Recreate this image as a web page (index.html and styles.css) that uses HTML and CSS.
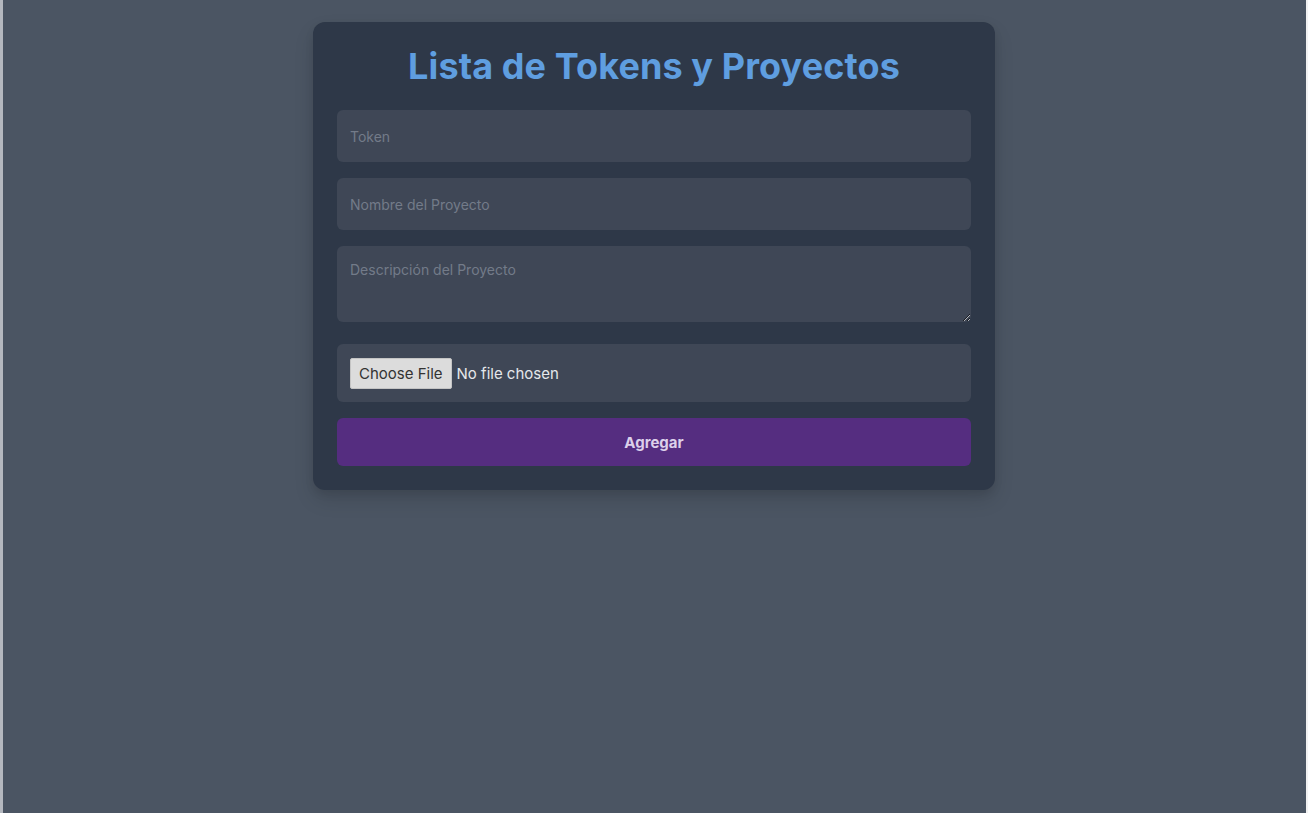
FILE: index.html
```html
<!DOCTYPE html>
<html lang="es">
<head>
<meta charset="utf-8">
<title>Lista de Tokens y Proyectos</title>
<link rel="stylesheet" href="styles.css">
</head>
<body>
<main class="page">
  <form class="card">
    <h1 class="title">Lista de Tokens y Proyectos</h1>
    <input class="field field-input" type="text" placeholder="Token">
    <input class="field field-input" type="text" placeholder="Nombre del Proyecto">
    <textarea class="field field-textarea" placeholder="Descripción del Proyecto"></textarea>
    <div class="field file-wrap"><input class="file-input" type="file"></div>
    <button class="submit" type="button">Agregar</button>
  </form>
</main>
</body>
</html>
```
FILE: styles.css
```css
html, body {
  margin: 0;
  height: 100%;
}
body {
  background: #4b5563;
  border-left: 3px solid #b4b8bf;
  border-right: 2px solid #f2f2f2;
  box-sizing: border-box;
  font-family: Inter, "Liberation Sans", Arial, sans-serif;
}
.page {
  display: flex;
  justify-content: center;
  padding-top: 22px;
  padding-right: 1px;
}
.card {
  width: 682px;
  box-sizing: border-box;
  background: #2e3848;
  border-radius: 12px;
  padding: 24px;
  display: flex;
  flex-direction: column;
  gap: 16px;
  box-shadow: 0 10px 20px rgba(0,0,0,0.12), 0 4px 8px rgba(0,0,0,0.08);
}
.title {
  margin: 0 0 8px;
  text-align: center;
  color: #5f9ee0;
  font-size: 36px;
  line-height: 40px;
  font-weight: 700;
  letter-spacing: 0.1px;
}
.field {
  display: block;
  box-sizing: border-box;
  width: 100%;
  background: #3f4756;
  border: none;
  border-radius: 6px;
  color: #d1d5db;
  font-family: inherit;
  font-size: 14px;
  outline: none;
  margin: 0;
}
.field::placeholder {
  color: #737b89;
}
.field-input {
  height: 52px;
  padding: 0 13px;
}
.field-textarea {
  height: 76px;
  padding: 15px 13px;
  resize: vertical;
  margin-bottom: 6px;
}
.file-wrap {
  height: 58px;
  padding: 0 13px;
  display: flex;
  align-items: center;
}
.file-input {
  font-family: inherit;
  font-size: 15px;
  color: #e5e7eb;
}
.file-input::file-selector-button {
  font-family: inherit;
  font-size: 15px;
  color: #333;
  background: #dcdcdc;
  border: 1px solid #c4c4c4;
  border-radius: 2px;
  padding: 5px 8px;
  margin-right: 5px;
}
.submit {
  height: 48px;
  border: none;
  border-radius: 6px;
  background: #552d80;
  color: #dcd0ea;
  font-family: inherit;
  font-size: 15px;
  font-weight: 700;
  cursor: pointer;
}
```
